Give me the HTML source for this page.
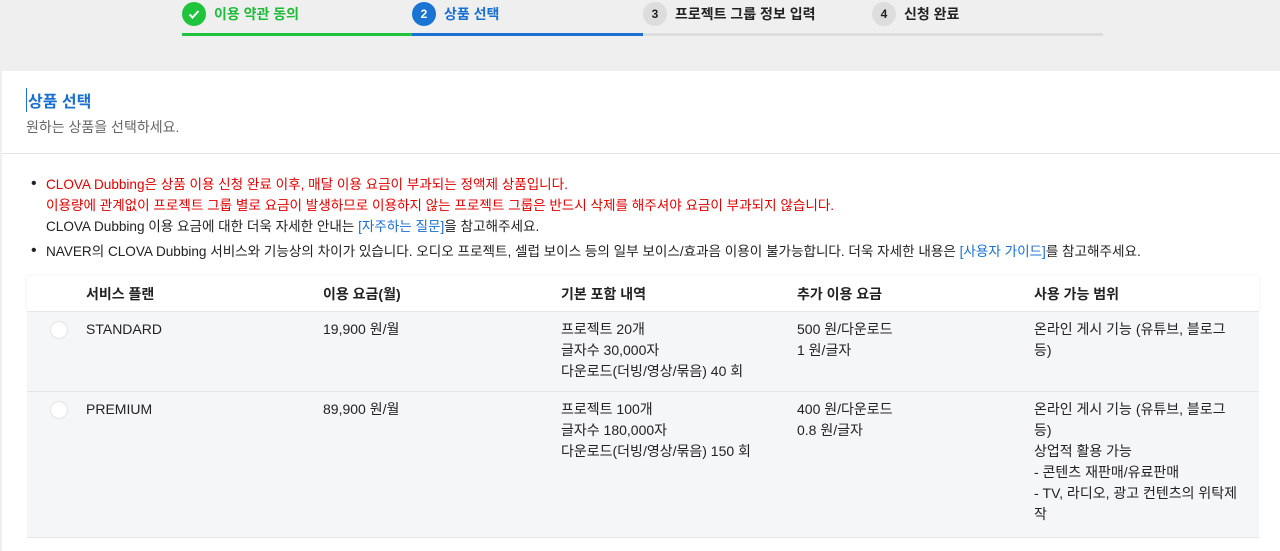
<!DOCTYPE html>
<html><head><meta charset="utf-8"><style>
body{margin:0;width:1280px;height:545px;overflow:hidden;background:#efefef;font-family:"Liberation Sans","Noto Sans CJK KR",sans-serif;color:#222;font-size:14px}
.step{position:absolute;top:2px;height:24px;display:flex;align-items:center;font-weight:bold;font-size:14px}
.c{width:24px;height:24px;border-radius:50%;display:flex;align-items:center;justify-content:center;margin-right:8px;font-size:12px}
.bar{position:absolute;top:33px;height:3px}
.card{position:absolute;left:2px;top:71px;width:1278px;height:480px;background:#fff}
.ab{position:absolute;white-space:nowrap}
.red{color:#e00000}
.lnk{color:#1a6fd0}
.row{position:absolute;left:27px;width:1232px;background:#f5f6f8;border-top:1px solid #e6e6e6}
.radio{position:absolute;left:23px;width:16px;height:16px;border-radius:50%;background:#fff;border:1px solid #e3e3e3}
.cell{position:absolute;line-height:21px;white-space:nowrap}
.bul{font-size:13.6px;letter-spacing:-0.02px}
</style></head><body>
<div class="step" style="left:182px;color:#1fbb3b"><div class="c" style="background:#1fc43c"><svg width="14" height="14" viewBox="0 0 14 14"><path d="M2.5 7.5l3 3 6-6.5" stroke="#fff" stroke-width="2" fill="none"/></svg></div>이용 약관 동의</div>
<div class="step" style="left:412px;color:#1a6fd0"><div class="c" style="background:#1a74d4;color:#fff">2</div>상품 선택</div>
<div class="step" style="left:643px;color:#222"><div class="c" style="background:#ddd">3</div>프로젝트 그룹 정보 입력</div>
<div class="step" style="left:872px;color:#222"><div class="c" style="background:#ddd">4</div>신청 완료</div>
<div class="bar" style="left:182px;width:230px;background:#1fc43c"></div>
<div class="bar" style="left:412px;width:231px;background:#1a6fd0"></div>
<div class="bar" style="left:643px;width:460px;background:#ddd"></div>
<div class="card"></div>
<div class="ab" style="left:26px;top:88px;font-size:16px;font-weight:bold;color:#1a6fd0;border-left:1px solid #1a6fd0;padding-left:1px">상품 선택</div>
<div class="ab" style="left:26px;top:117px;color:#666">원하는 상품을 선택하세요.</div>
<div class="ab" style="left:2px;top:153px;width:1278px;border-top:1px solid #e5e5e5"></div>
<div class="ab" style="left:31px;top:173px;line-height:21px;font-size:16px">•</div>
<div class="ab bul" style="left:46px;top:174px;line-height:21px"><span class="red">CLOVA Dubbing은 상품 이용 신청 완료 이후, 매달 이용 요금이 부과되는 정액제 상품입니다.<br>이용량에 관계없이 프로젝트 그룹 별로 요금이 발생하므로 이용하지 않는 프로젝트 그룹은 반드시 삭제를 해주셔야 요금이 부과되지 않습니다.</span><br>CLOVA Dubbing 이용 요금에 대한 더욱 자세한 안내는 <span class="lnk">[자주하는 질문]</span>을 참고해주세요.</div>
<div class="ab" style="left:31px;top:240px;line-height:21px;font-size:16px">•</div>
<div class="ab bul" style="left:46px;top:241px;line-height:21px">NAVER의 CLOVA Dubbing 서비스와 기능상의 차이가 있습니다. 오디오 프로젝트, 셀럽 보이스 등의 일부 보이스/효과음 이용이 불가능합니다. 더욱 자세한 내용은 <span class="lnk">[사용자 가이드]</span>를 참고해주세요.</div>
<div class="ab" style="left:27px;top:276px;width:1232px;height:35px;box-shadow:0 0 3px rgba(0,0,0,.08)"></div>
<div class="cell" style="left:86px;top:284px;font-weight:bold">서비스 플랜</div>
<div class="cell" style="left:323px;top:284px;font-weight:bold">이용 요금(월)</div>
<div class="cell" style="left:561px;top:284px;font-weight:bold">기본 포함 내역</div>
<div class="cell" style="left:797px;top:284px;font-weight:bold">추가 이용 요금</div>
<div class="cell" style="left:1034px;top:284px;font-weight:bold">사용 가능 범위</div>
<div class="row" style="top:311px;height:80px"><div class="radio" style="top:9px"></div></div>
<div class="cell" style="left:86px;top:319px">STANDARD</div>
<div class="cell" style="left:323px;top:319px">19,900 원/월</div>
<div class="cell" style="left:561px;top:319px">프로젝트 20개<br>글자수 30,000자<br>다운로드(더빙/영상/묶음) 40 회</div>
<div class="cell" style="left:797px;top:319px">500 원/다운로드<br>1 원/글자</div>
<div class="cell" style="left:1034px;top:319px">온라인 게시 기능 (유튜브, 블로그<br>등)</div>
<div class="row" style="top:391px;height:146px"><div class="radio" style="top:9px"></div></div>
<div class="cell" style="left:86px;top:399px">PREMIUM</div>
<div class="cell" style="left:323px;top:399px">89,900 원/월</div>
<div class="cell" style="left:561px;top:399px">프로젝트 100개<br>글자수 180,000자<br>다운로드(더빙/영상/묶음) 150 회</div>
<div class="cell" style="left:797px;top:399px">400 원/다운로드<br>0.8 원/글자</div>
<div class="cell" style="left:1034px;top:399px">온라인 게시 기능 (유튜브, 블로그<br>등)<br>상업적 활용 가능<br>- 콘텐츠 재판매/유료판매<br>- TV, 라디오, 광고 컨텐츠의 위탁제<br>작</div>
<div class="ab" style="left:27px;top:537px;width:1232px;border-top:1px solid #e6e6e6"></div>
</body></html>
